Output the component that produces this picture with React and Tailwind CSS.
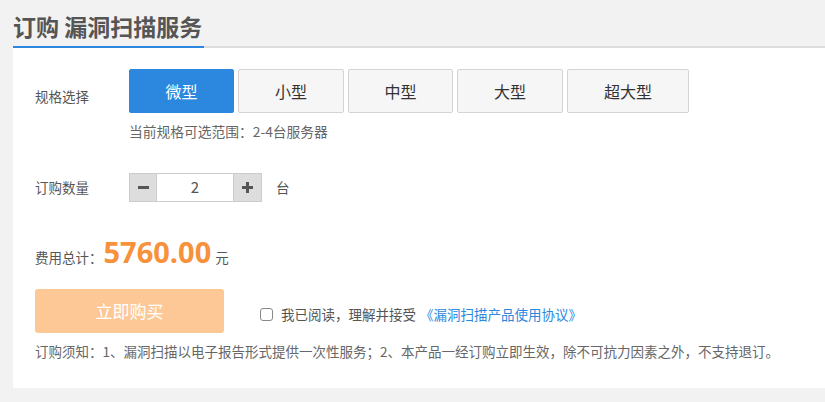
export default function App() {
  const specs = [
    { name: "微型", w: "w-[105px]", active: true },
    { name: "小型", w: "w-[106px]" },
    { name: "中型", w: "w-[105px]" },
    { name: "大型", w: "w-[106px]" },
    { name: "超大型", w: "w-[122px]" },
  ];
  return (
    <div
      className="w-[825px] h-[402px] bg-[#f2f2f2] overflow-hidden text-[#555]"
      style={{ fontFamily: '"Noto Sans CJK SC", "Noto Sans", sans-serif' }}
    >
      <div className="pl-[13px] pt-[11px]">
        <div className="flex border-b-2 border-[#dddddd]">
          <div className="text-[23px] font-bold leading-[30px] text-[#555] border-b-2 border-[#2b88de] -mb-[2px] pb-[5px] pr-[2px]">
            订购 漏洞扫描服务
          </div>
        </div>
        <div className="bg-white h-[340px] pl-[22px] pt-[21px]">
          <div className="flex">
            <div className="w-[94px] text-[13.5px] pt-[17px]">规格选择</div>
            <div>
              <div className="flex gap-[4px]">
                {specs.map((s) => (
                  <div
                    key={s.name}
                    className={
                      s.w +
                      " h-[44px] rounded-[2px] flex items-center justify-center text-[16px] " +
                      (s.active
                        ? "bg-[#2b88de] text-white border border-[#2b88de]"
                        : "bg-[#f6f6f6] text-[#333] border border-[#d4d4d4]")
                    }
                  >
                    {s.name}
                  </div>
                ))}
              </div>
              <div className="text-[13.75px] text-[#666] mt-[9px] leading-[18px]">
                当前规格可选范围：2-4台服务器
              </div>
            </div>
          </div>

          <div className="flex items-center mt-[33px]">
            <div className="w-[94px] text-[13.5px]">订购数量</div>
            <div className="flex h-[29px] border border-[#cccccc]">
              <div className="w-[27px] bg-[#dddddd] border-r border-[#cccccc] flex items-center justify-center">
                <div className="w-[11px] h-[3px] bg-[#555]" />
              </div>
              <div className="w-[76px] bg-white flex items-center justify-center text-[15px] text-[#555]">
                2
              </div>
              <div className="w-[28px] bg-[#dddddd] border-l border-[#cccccc] flex items-center justify-center relative">
                <div className="w-[11px] h-[3px] bg-[#555]" />
                <div className="absolute w-[3px] h-[11px] bg-[#555]" />
              </div>
            </div>
            <div className="ml-[14px] text-[13.5px]">台</div>
          </div>

          <div className="flex items-end mt-[33px]">
            <div className="text-[13.5px] leading-[20px] mb-[2px]">费用总计：</div>
            <div
              className="text-[29px] font-bold text-[#f7913b] leading-[34px] ml-[1px]"
              style={{ fontFamily: '"Open Sans", "Noto Sans", sans-serif' }}
            >
              5760.00
            </div>
            <div className="text-[13.5px] leading-[20px] ml-[4px] mb-[2px]">元</div>
          </div>

          <div className="flex items-center mt-[20px]">
            <div className="w-[189px] h-[44px] bg-[#fec896] rounded-[3px] flex items-center justify-center text-white text-[17px]">
              立即购买
            </div>
            <div className="flex items-center ml-[36px] mt-[6px] text-[13.5px]">
              <div className="w-[13px] h-[13px] border border-[#888] rounded-[3px] bg-white" />
              <span className="ml-[8px]">我已阅读，理解并接受</span>
              <span className="ml-[4px] text-[#2b88de]">《漏洞扫描产品使用协议》</span>
            </div>
          </div>

          <div className="text-[13.5px] mt-[8px] text-[#666]">
            订购须知：1、漏洞扫描以电子报告形式提供一次性服务；2、本产品一经订购立即生效，除不可抗力因素之外，不支持退订。
          </div>
        </div>
      </div>
    </div>
  );
}
